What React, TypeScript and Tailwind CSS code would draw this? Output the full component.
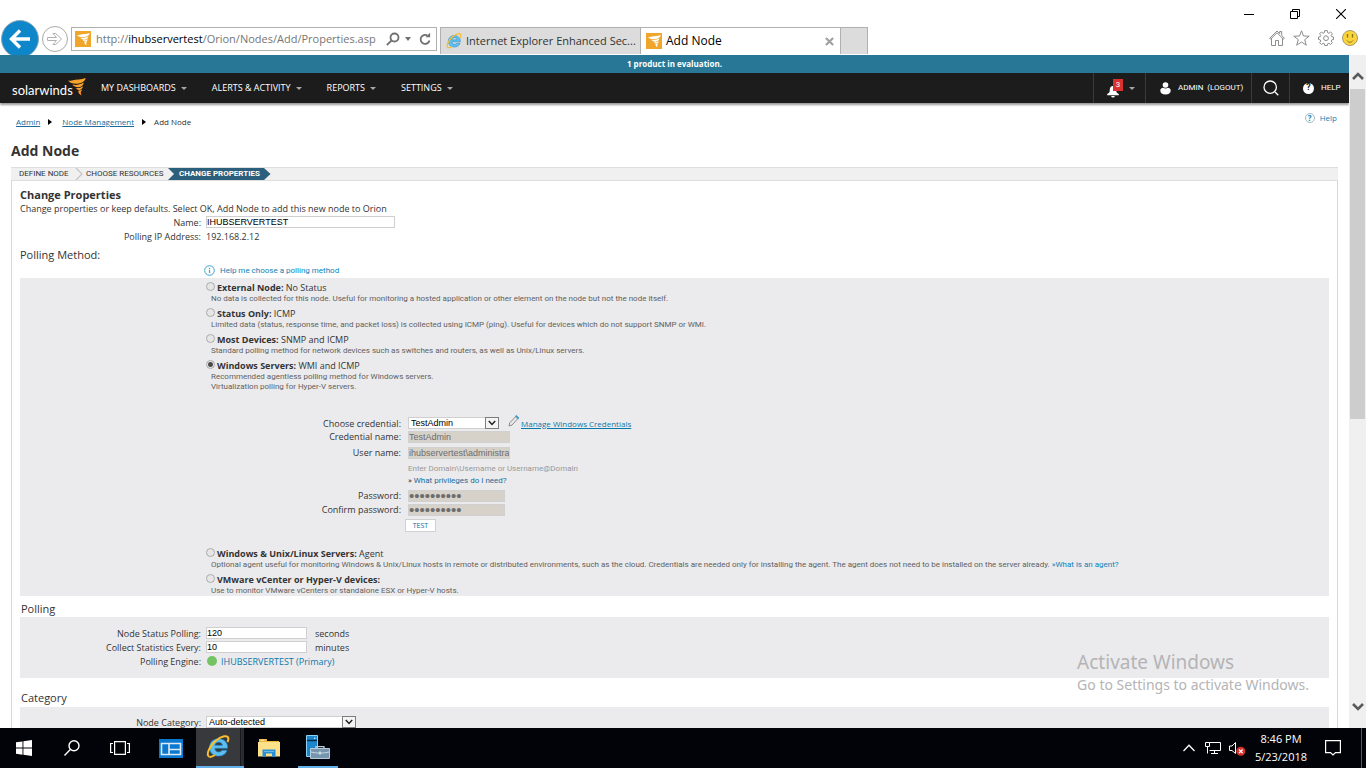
import React, { useState } from "react";

function Tornado({ className, color = "#f6a22b", shade }: { className: string; color?: string; shade?: string }) {
  return (
    <svg viewBox="0 0 18 18" className={className} aria-hidden="true">
      {shade && (
        <path
          d="M3 6.200c3 1.500 9 1 12-1.200l-1 1.600c-2.800 1.400-6.300 1.800-9 .8ZM7 10.200c2 .9 5 .7 7.300-.6l-1 1.300c-1.800.8-3.800.8-5.300.2ZM10.300 13.500l2.600.5.300 2.500.8 1.200c-2-.6-3.500-2.200-3.700-4.200Z"
          fill={shade}
        />
      )}
      <path d="M0 2.600C1.500 3 2.500 2.900 4 2.400 8.500 1.400 13 1.800 17.600 0c-.3 2.800-2.800 5-7 5.600C6 6.200 2 5.200 0 2.600Z" fill={color} />
      <path d="M4.500 6.600c3.500.8 7.600.3 11.300-2-.4 2.600-2.200 4.300-5 4.700-2.600.3-4.800-.8-6.300-2.700Z" fill={color} />
      <path d="M8 9.900c2.300.5 4.700.1 6.900-1.700-.2 2.200-1.500 3.500-3.300 3.700-1.600.1-2.800-.7-3.600-2Z" fill={color} />
      <path d="M10.300 12.500c1.300.2 2.500 0 3.700-1-.2 1.400-.8 2.100-1.500 2.500l.7 3.100c-1.900-.9-2.800-2.600-2.900-4.600Z" fill={color} />
    </svg>
  );
}

function SiteIcon() {
  return (
    <span className="flex size-4 shrink-0 items-center justify-center bg-[#f0a52b]">
      <Tornado className="size-[13px]" color="#ffffff" />
    </span>
  );
}

function IeLogo({ className }: { className: string }) {
  return (
    <svg viewBox="0 0 24 24" className={"shrink-0 " + className} aria-hidden="true">
      <path
        d="M21.500 13.300H8.800c.2 2.300 1.700 3.700 3.900 3.700 1.600 0 2.700-.6 3.300-1.700h5.100c-1.200 3.600-4.300 5.800-8.500 5.800-5.400 0-9.100-3.400-9.100-8.600s3.700-8.800 9.100-8.800 9 3.700 9 8.600c0 .4 0 .7-.1 1ZM8.900 10.300h7.500c-.2-1.900-1.600-3.100-3.700-3.100s-3.500 1.200-3.800 3.100Z"
        fill="#5cc0f0"
        stroke="#1f7fc0"
        strokeWidth=".7"
      />
      <path
        d="M3.400 21.900C-.5 20.300 3.200 10.900 10.300 5.200 15.700.9 21.700-.1 22.300 3c.2 1.200-.1 2.500-.8 4"
        fill="none"
        stroke="#f9bd2e"
        strokeWidth="2"
      />
      <path d="M3.400 21.900c1.300.3 3.300-.3 5.600-1.800" fill="none" stroke="#f9bd2e" strokeWidth="1.800" />
    </svg>
  );
}

function Caret() {
  return <span className="border-x-[3px] border-t-[3px] border-x-transparent border-t-[#a6a6a6]" />;
}

function BrowserHeader() {
  return (
    <header className="flex h-[55px] shrink-0 overflow-hidden bg-white">
      <div className="flex items-start pt-5">
        <button aria-label="Back" className="ml-px flex size-[38px] items-center justify-center rounded-full border border-[#8fa9b8] bg-[#0d86ca]">
          <svg viewBox="0 0 24 24" className="size-6" fill="none" stroke="#fff" strokeWidth="3.400">
            <path d="M22 12H4M12 3.500 3.500 12l8.500 8.500" />
          </svg>
        </button>
        <button aria-label="Forward" className="mt-[6px] ml-[3px] flex size-[26px] items-center justify-center rounded-full border border-[#a9a9a9]">
          <svg viewBox="0 0 16 16" className="size-4" fill="none" stroke="#b0b0b0" strokeWidth="1">
            <path d="M.5 6.500h9L6 2.500h2.700L14.500 8l-5.800 5.500H6l3.500-4h-9Z" />
          </svg>
        </button>
        <form className="mt-[7px] ml-[3px] flex h-6 w-[366px] items-center border border-[#b0b0b0] pr-[5px] pl-[3px]">
          <SiteIcon />
          <div className="ml-[5px] flex-1 text-[11px] leading-5 whitespace-nowrap text-[#767676]">
            http://<span className="text-black">ihubservertest</span>/Orion/Nodes/Add/Properties.asp
          </div>
          <button type="button" aria-label="Search" className="shrink-0">
            <svg viewBox="0 0 14 14" className="size-[14px]" fill="none" stroke="#707070" strokeWidth="1.800">
              <circle cx="8.500" cy="5.500" r="4" />
              <path d="M5.500 8.500.8 13.200" />
            </svg>
          </button>
          <span className="ml-[5px] border-x-[3px] border-t-4 border-x-transparent border-t-[#707070]" />
          <button type="button" aria-label="Refresh" className="ml-[8px] shrink-0">
            <svg viewBox="0 0 12 14" className="h-[14px] w-3" fill="none" stroke="#707070" strokeWidth="1.800">
              <path d="M10.500 8.500A4.500 4.500 0 1 1 8.500 3.600" />
              <path d="M6.500 5.200h4.600V.8Z" fill="#707070" stroke="none" />
            </svg>
          </button>
        </form>
        <nav className="mt-[7px] ml-[3px] flex h-[27px] text-[#333333]">
          <button className="flex w-[201px] items-center border border-b-0 border-[#b0b0b0] bg-[#dcdcdc] pl-[5px] text-[11px] whitespace-nowrap">
            <IeLogo className="mr-[4px] size-4" />
            Internet Explorer Enhanced Sec...
          </button>
          <div className="flex w-[199px] items-center border-t border-[#b0b0b0] bg-white pr-[6px] pl-[5px] text-[12px] text-black">
            <SiteIcon />
            <span className="ml-1 flex-1">Add Node</span>
            <button aria-label="Close tab">
              <svg viewBox="0 0 10 10" className="size-[9px]" stroke="#a0a0a0" strokeWidth="2.400">
                <path d="m1 1 8 8M9 1 1 9" />
              </svg>
            </button>
          </div>
          <button aria-label="New tab" className="w-7 border border-b-0 border-[#b0b0b0] bg-[#dcdcdc]" />
        </nav>
      </div>
      <div className="ml-auto flex flex-col items-end">
        <div className="flex h-[28px] items-center gap-9 pr-5">
          <button aria-label="Minimize">
            <svg viewBox="0 0 10 10" className="size-[10px]" stroke="#000"><path d="M0 5.500h10" /></svg>
          </button>
          <button aria-label="Restore">
            <svg viewBox="0 0 10 10" className="size-[10px]" fill="none" stroke="#000">
              <path d="M.5 2.500h7v7h-7ZM2.500 2.500v-2h7v7h-2" />
            </svg>
          </button>
          <button aria-label="Close">
            <svg viewBox="0 0 10 10" className="size-[10px]" fill="none" stroke="#000" strokeWidth="1.100"><path d="m0 0 10 10M10 0 0 10" /></svg>
          </button>
        </div>
        <div className="mt-[2px] flex gap-2 pr-2">
          <button aria-label="Home">
            <svg viewBox="0 0 16 16" className="size-4" fill="none" stroke="#8c8c8c" strokeWidth="1">
              <path d="M2.500 8v7.500h4v-5h3v5h4V8M.7 8.200 8 1l2.700 2.600V1.500h2v4l2.700 2.700-1 .9L8 2.800 1.600 9.100Z" />
            </svg>
          </button>
          <button aria-label="Favorites">
            <svg viewBox="0 0 17 16" className="h-4 w-[17px]" fill="none" stroke="#8c8c8c" strokeWidth="1">
              <path d="m8.500.8 2 5.200 5.700.2-4.500 3.500 1.600 5.500-4.800-3.200-4.800 3.200 1.600-5.500L.8 6.200l5.700-.2Z" />
            </svg>
          </button>
          <button aria-label="Tools">
            <svg viewBox="0 0 16 16" className="size-4" fill="none" stroke="#8c8c8c" strokeWidth="1">
              <path d="M6.700.6h2.600l.3 2.100 1.400.6 1.700-1.300 1.800 1.800L13.200 5.500l.6 1.300 1.700.2v2.500l-1.700.3-.6 1.200 1.200 1.700-1.800 1.800-1.700-1.200-1.300.5-.3 1.700H6.700l-.3-1.700-1.300-.5-1.700 1.200-1.800-1.800 1.200-1.700-.6-1.200-1.700-.3V7l1.700-.2.6-1.300L1.600 3.800 3.400 2l1.700 1.300 1.300-.6Z" />
              <circle cx="8" cy="8.200" r="2.400" />
            </svg>
          </button>
          <button aria-label="Send feedback">
            <svg viewBox="0 0 16 16" className="size-4">
              <circle cx="8" cy="8" r="7.500" fill="#fbd43c" stroke="#a39a72" />
              <path d="M5.500 4v3.500M10.500 4v3.500" stroke="#8a7420" strokeWidth="1.400" />
              <path d="M5 10.500c1.500 2.300 4.500 2.300 6 0" fill="none" stroke="#8a7420" />
            </svg>
          </button>
        </div>
      </div>
    </header>
  );
}

const MENUS = ["MY DASHBOARDS", "ALERTS & ACTIVITY", "REPORTS", "SETTINGS"];

function ProductNav() {
  return (
    <nav className="flex h-[30px] shrink-0 bg-[#1c1c1c] pl-3 text-white shadow-[0_2px_2px_#9a9a9a]">
      <a href="#home" className="flex w-[73px]">
        <span className="pt-[8px] font-['Lato'] text-[13px] leading-[18px]">solarwinds</span>
        <Tornado className="-ml-[5px] mt-[5px] size-[18px] shrink-0" shade="#c8371f" />
      </a>
      <div className="ml-4 flex items-center gap-[25px] text-[9px]">
        {MENUS.map((m) => (
          <button key={m} className="flex items-center gap-[5px] whitespace-nowrap">
            {m}
            <Caret />
          </button>
        ))}
      </div>
      <div className="ml-auto flex font-['Roboto','Open_Sans',sans-serif] text-[8px] whitespace-nowrap">
        <button aria-label="Notifications" className="flex w-[52px] items-center border-l border-[#3a3a3a] pl-[13px]">
          <span className="relative mt-[5px]">
            <svg viewBox="0 0 12 14" className="h-[14px] w-3" fill="#fff">
              <path d="M6 2c2.200 0 3.200 1.700 3.200 3.700 0 2.600.7 3.300 2.600 4.300v1.300H.2V10c1.900-1 2.600-1.700 2.600-4.300C2.800 3.700 3.800 2 6 2ZM4.200 12h3.600a1.800 1.500 0 0 1-3.600 0Z" />
            </svg>
            <span className="absolute -top-[5px] left-[6px] flex h-3 w-[10px] items-center justify-center bg-[#d9312e]">3</span>
          </span>
          <span className="ml-[10px] flex"><Caret /></span>
        </button>
        <a href="#logout" className="flex w-[106px] items-center border-l border-[#3a3a3a] pl-[14px]">
          <svg viewBox="0 0 11 13" className="mr-[7px] h-[13px] w-[11px]" fill="#fff">
            <circle cx="5.500" cy="3" r="2.800" />
            <path d="M.3 8.500c0-2 1.500-2.800 2.800-2.800 1.300 1 3.500 1 4.800 0 1.300 0 2.800.8 2.800 2.800 0 2.500-2 4-5.200 4s-5.200-1.500-5.200-4Z" />
          </svg>
          ADMIN&nbsp; (LOGOUT)
        </a>
        <button aria-label="Search" className="flex w-[38px] items-center justify-center border-l border-[#3a3a3a]">
          <svg viewBox="0 0 16 16" className="size-4" fill="none" stroke="#fff" strokeWidth="1.300">
            <circle cx="7.200" cy="7.200" r="6.200" />
            <path d="m12 12 3.300 3.300" />
          </svg>
        </button>
        <a href="#help" className="flex w-[60px] items-center border-l border-[#3a3a3a] pl-[13px]">
          <span className="mr-[7px] flex size-[11px] items-center justify-center rounded-full bg-white text-[9px] font-bold text-[#1c1c1c]">?</span>
          HELP
        </a>
      </div>
    </nav>
  );
}

function Steps() {
  return (
    <ol className="mx-[11px] flex h-[14px] shrink-0 items-center border-y border-[#dedede] bg-[#f0f0f0] pl-2 font-['Roboto','Open_Sans',sans-serif] text-[8px] leading-3 whitespace-nowrap text-[#333333]">
      <li className="w-[56px]">DEFINE NODE</li>
      <li className="flex items-center">
        <svg viewBox="0 0 8 12" className="h-3 w-2 shrink-0 stroke-[#c4c4c4]" fill="none" strokeWidth="1.200" aria-hidden="true">
          <path d="M1 0l6 6-6 6" />
        </svg>
        <span className="ml-[3px] w-[82px]">CHOOSE RESOURCES</span>
      </li>
      <li aria-current="step" className="flex h-3 items-center bg-[#2c5f7c] font-bold text-white">
        <svg viewBox="0 0 8 12" className="h-3 w-2" aria-hidden="true">
          <path d="M0 0 6 6 0 12Z" fill="#f0f0f0" />
        </svg>
        <span className="mx-[3px]">CHANGE PROPERTIES</span>
      </li>
      <li aria-hidden="true" className="flex">
        <svg viewBox="0 0 8 12" className="h-3 w-2">
          <path d="M0 0h1l6.500 6L1 12H0Z" fill="#2c5f7c" />
        </svg>
      </li>
    </ol>
  );
}

function Field({ label, id, children }: { label: string; id?: string; children: React.ReactNode }) {
  return (
    <div className="grid h-[14px] grid-cols-[181px_1fr] items-center gap-x-[5px]">
      <label htmlFor={id} className="text-right">{label}</label>
      <div className="flex items-center">{children}</div>
    </div>
  );
}

function Credential({ label, id, children }: { label: string; id: string; children: React.ReactNode }) {
  return (
    <div className="grid h-[13px] grid-cols-[381px_1fr] items-center gap-x-[7px]">
      <label htmlFor={id} className="text-right">{label}</label>
      <div className="flex items-center">{children}</div>
    </div>
  );
}

const INPUT = "h-3 border border-[#cfcfcf] bg-white p-0 font-['Liberation_Sans'] text-[9px] leading-[10px] text-black outline-none";
const DISABLED = "h-3 border border-[#d0d0d0] bg-[#d6d2ca] p-0 font-['Liberation_Sans'] leading-[10px] text-[#6d6d6d] outline-none";
const SMALL = "font-['Roboto','Open_Sans',sans-serif] text-[8px]";

function Select({ id, value, className }: { id: string; value: string; className: string }) {
  return (
    <span className="relative flex">
      <select id={id} className={"h-3 appearance-none border border-[#cfcfcf] bg-white pl-[2px] font-['Liberation_Sans'] text-[9px] leading-[10px] text-black " + className}>
        <option>{value}</option>
      </select>
      <span className="pointer-events-none absolute inset-y-0 right-0 flex w-[14px] items-center justify-center border border-[#7d7d7d] bg-[#f4f4f4]">
        <svg viewBox="0 0 8 6" className="h-[6px] w-2" fill="none" stroke="#222" strokeWidth="1.500"><path d="m.8 1 3.200 3.500L7.200 1" /></svg>
      </span>
    </span>
  );
}

function Method(props: {
  id: string;
  name: string;
  detail?: string;
  selected: string;
  onSelect: (id: string) => void;
  children: React.ReactNode;
}) {
  return (
    <div className="pl-[186px]">
      <div className="flex h-[14px] items-center">
        <input
          type="radio"
          name="method"
          id={props.id}
          checked={props.selected === props.id}
          onChange={() => props.onSelect(props.id)}
          className="mb-[2px] size-[9px] shrink-0 appearance-none rounded-full border border-[#ababab] bg-[#e6e6e6] checked:bg-[radial-gradient(#4a4a4a_0_2px,#e6e6e6_3px)]"
        />
        <label htmlFor={props.id} className="ml-[2px] whitespace-pre">
          <b>{props.name}:</b> {props.detail}
        </label>
      </div>
      <div className={"pl-[5px] leading-[10px] text-[#5f5f5f] " + SMALL}>{props.children}</div>
    </div>
  );
}

function NodeForm() {
  const [method, setMethod] = useState("windows");
  const radio = { selected: method, onSelect: setMethod };
  return (
    <div className="mx-[11px] border-x border-[#d8d8d2] px-2 text-[9px] leading-[13px] text-[#333333]">
      <h2 className="pt-[6px] text-[11px] leading-[15px] font-bold">Change Properties</h2>
      <p>Change properties or keep defaults. Select OK, Add Node to add this new node to Orion</p>
      <Field label="Name:" id="name"><input id="name" defaultValue="IHUBSERVERTEST" className={"w-[189px] " + INPUT} /></Field>
      <Field label="Polling IP Address:">192.168.2.12</Field>
      <h3 className="pt-[3px] text-[11px] leading-[18px]">Polling Method:</h3>
      <a href="#method-help" className={"mb-px ml-[184px] flex h-[13px] w-fit items-center text-[#0b83b8] " + SMALL}>
        <svg viewBox="0 0 11 11" className="mr-[5px] size-[11px]" fill="none" stroke="#3ba4d0">
          <circle cx="5.500" cy="5.500" r="4.800" />
          <path d="M5.500 4.800v3.200M5.500 2.700v1.200" strokeWidth="1.200" />
        </svg>
        Help me choose a polling method
      </a>

      <section className="bg-[#ebebed] pt-[2px]">
        <div className="flex flex-col gap-[2px]">
          <Method id="external" name="External Node" detail="No Status" {...radio}>
            No data is collected for this node. Useful for monitoring a hosted application or other element on the node but not the node itself.
          </Method>
          <Method id="icmp" name="Status Only" detail="ICMP" {...radio}>
            Limited data (status, response time, and packet loss) is collected using ICMP (ping). Useful for devices which do not support SNMP or WMI.
          </Method>
          <Method id="snmp" name="Most Devices" detail="SNMP and ICMP" {...radio}>
            Standard polling method for network devices such as switches and routers, as well as Unix/Linux servers.
          </Method>
          <Method id="windows" name="Windows Servers" detail="WMI and ICMP" {...radio}>
            Recommended agentless polling method for Windows servers.
            <br />
            Virtualization polling for Hyper-V servers.
          </Method>
        </div>

        <div className="flex flex-col pt-[23px] pb-[14px]">
          <Credential label="Choose credential:" id="credential">
            <Select id="credential" value="TestAdmin" className="w-[91px]" />
            <svg viewBox="0 0 11 12" className="mb-[4px] ml-[9px] h-3 w-[11px]" fill="none" stroke="#8a8a8a">
              <path d="M1 11l.8-3.200L7.500 1.800l2.200 2L4 10Z" />
              <path d="m7.500 1.800.8-.9 2.200 2-.8.9" stroke="#2d9bd0" strokeWidth="1.300" />
            </svg>
            <a href="#credentials" className="ml-[2px] text-[8px] text-[#0b78ac] underline">Manage Windows Credentials</a>
          </Credential>
          <div className="mt-[2px] flex flex-col gap-[3px]">
            <Credential label="Credential name:" id="credname">
              <input id="credname" disabled defaultValue="TestAdmin" className={"w-[102px] text-[9px] " + DISABLED} />
            </Credential>
            <Credential label="User name:" id="user">
              <input id="user" disabled defaultValue="ihubservertest\administra" className={"w-[102px] text-[9px] " + DISABLED} />
            </Credential>
          </div>
          <p className={"mt-1 ml-[388px] leading-3 text-[#999999] " + SMALL}>Enter Domain\Username or Username@Domain</p>
          <p className={"mb-[2px] ml-[388px] leading-3 " + SMALL}>
            » <a href="#privileges" className="text-[#1b6a97]">What privileges do I need?</a>
          </p>
          <div className="flex flex-col gap-px">
            <Credential label="Password:" id="password">
              <input id="password" type="password" disabled defaultValue="0123456789" className={"w-[97px] text-[15px] " + DISABLED} />
            </Credential>
            <Credential label="Confirm password:" id="confirm">
              <input id="confirm" type="password" disabled defaultValue="0123456789" className={"w-[97px] text-[15px] " + DISABLED} />
            </Credential>
          </div>
          <button className="mt-[3px] ml-[385px] h-[13px] w-[31px] border border-[#d0d0d0] bg-white text-[7px] leading-[10px] text-[#1b6a97]">TEST</button>
        </div>

        <div className="flex flex-col gap-[2px]">
          <Method id="agent" name="Windows & Unix/Linux Servers" detail="Agent" {...radio}>
            Optional agent useful for monitoring Windows &amp; Unix/Linux hosts in remote or distributed environments, such as the cloud. Credentials are needed only for installing the agent. The agent does not need to be installed on the server already.{" "}
            <a href="#agent-help" className="text-[#0b83b8]">»What is an agent?</a>
          </Method>
          <Method id="vmware" name="VMware vCenter or Hyper-V devices" {...radio}>
            Use to monitor VMware vCenters or standalone ESX or Hyper-V hosts.
          </Method>
        </div>
      </section>

      <h3 className="pt-1 pl-px text-[11px] leading-[17px]">Polling</h3>
      <section className="bg-[#ebebed] pt-[9px] pb-[10px]">
        <Field label="Node Status Polling:" id="status">
          <input id="status" defaultValue="120" className={"w-[101px] " + INPUT} />
          <span className="ml-2">seconds</span>
        </Field>
        <Field label="Collect Statistics Every:" id="stats">
          <input id="stats" defaultValue="10" className={"w-[101px] " + INPUT} />
          <span className="ml-2">minutes</span>
        </Field>
        <Field label="Polling Engine:">
          <span className="ml-px size-[10px] rounded-full bg-[#74c365]" />
          <a href="#engine" className="ml-1 text-[#0b78ac]">IHUBSERVERTEST (Primary)</a>
        </Field>
      </section>

      <h3 className="pt-[11px] pl-px text-[11px] leading-[18px]">Category</h3>
      <section className="bg-[#ebebed] pt-2 pb-10">
        <Field label="Node Category:" id="category"><Select id="category" value="Auto-detected" className="w-[150px]" /></Field>
      </section>
    </div>
  );
}

function Taskbar() {
  return (
    <footer className="flex h-10 shrink-0 bg-[#020308] text-white">
      <button aria-label="Start" className="flex w-12 items-center justify-center">
        <svg viewBox="0 0 16 16" className="size-4" fill="#fff"><path d="M0 2.300 6.500 1.400V7.600H0ZM7.400 1.300 16 0v7.600H7.400ZM0 8.500h6.500v6.200L0 13.800ZM7.400 8.500H16V16l-8.600-1.200Z" /></svg>
      </button>
      <button aria-label="Search" className="flex w-12 items-center justify-center">
        <svg viewBox="0 0 16 16" className="size-4" fill="none" stroke="#fff" strokeWidth="1.400"><circle cx="10" cy="5.800" r="5" /><path d="M6.300 9.500.5 15.500" /></svg>
      </button>
      <button aria-label="Task view" className="flex w-12 items-center justify-center">
        <svg viewBox="0 0 20 14" className="h-[14px] w-5" fill="none" stroke="#fff" strokeWidth="1.200"><path d="M4.600.6h10.800v12.800H4.600ZM3 2.500H.6v9H3M17 2.500h2.400v9H17" /></svg>
      </button>
      <button aria-label="Server console" className="ml-[3px] flex w-12 items-center justify-center">
        <svg viewBox="0 0 24 19" className="h-[19px] w-6">
          <path d="M0 0h24v19H0Z" fill="#0b78d0" />
          <path d="M2.500 4.500h19v11h-19ZM10 4.500v11M10 10.500h11.500" fill="none" stroke="#dceaf5" strokeWidth="1.600" />
        </svg>
      </button>
      <button aria-label="Internet Explorer" className="ml-px flex w-12 border-b-2 border-[#63b1e8]">
        <span className="flex h-full flex-1 items-center justify-center bg-[#37393d]"><IeLogo className="size-6" /></span>
        <span className="h-full w-1 border-l border-[#17191c] bg-[#2a2c30]" />
      </button>
      <button aria-label="File Explorer" className="ml-px flex w-12 items-center justify-center">
        <svg viewBox="0 0 22 18" className="h-[18px] w-[22px]">
          <path d="M1 0h8v2h12v4H1Z" fill="#e9b53c" />
          <path d="M2.500 1.200h4" stroke="#fff2c4" />
          <path d="M0 3h22v14.500H0Z" fill="#fde08a" />
          <path d="M4.500 18v-7.500h13V18H14v-3.500H8V18Z" fill="#2b8fd8" />
          <path d="M6 12.500h10" stroke="#6cb8ea" />
        </svg>
      </button>
      <button aria-label="Server Manager" className="ml-[5px] flex w-10 items-center justify-center border-b-2 border-[#63b1e8]">
        <svg viewBox="0 0 24 24" className="size-6">
          <path d="M.5.500h11v21H.5Z" fill="#1b86cc" stroke="#8fd0f5" />
          <path d="M1 5.500h10" stroke="#0a2c4a" strokeWidth="1.400" />
          <path d="M8 3.200h1.500" stroke="#fff" />
          <path d="M10 13.500v-1.800h8v1.800" fill="none" stroke="#b9cfdf" strokeWidth="1.300" />
          <path d="M4.500 13.500h19v10h-19Z" fill="#7796ad" stroke="#b4cbdb" />
          <path d="M5 17c5 1.500 13 1.500 18 0" fill="none" stroke="#c5d8e5" />
          <path d="M14 16.500v3" stroke="#e6f0f6" strokeWidth="1.400" />
        </svg>
      </button>
      <div className="ml-auto flex items-center">
        <button aria-label="Show hidden icons">
          <svg viewBox="0 0 12 8" className="h-2 w-3" fill="none" stroke="#fff" strokeWidth="1.300"><path d="m.5 7 5.500-5.700L11.500 7" /></svg>
        </button>
        <svg viewBox="0 0 16 14" className="ml-[10px] h-[14px] w-4" fill="none" stroke="#fff"><path d="M4.500 1.500h11v8h-11M.5 1.500h4v4h-4ZM2.500 5.500v7M9.500 9.500v3M6 12.500h7" /></svg>
        <svg viewBox="0 0 17 15" className="ml-2 h-[15px] w-[17px]" fill="none" stroke="#fff">
          <path d="M.5 5h2.500L6.500 1.500v11L3 9.500H.5Z" />
          <circle cx="11.800" cy="10.300" r="4.500" fill="#d9302c" stroke="none" />
          <path d="m10 8.500 3.600 3.600M13.600 8.500 10 12.100" strokeWidth="1.300" />
        </svg>
        <div className="w-[70px] text-center text-[11px] leading-[18px] whitespace-nowrap">
          <div>8:46 PM</div>
          <div>5/23/2018</div>
        </div>
        <button aria-label="Notifications" className="ml-[9px]">
          <svg viewBox="0 0 16 16" className="size-4" fill="none" stroke="#fff" strokeWidth="1.200"><path d="M.6.600h14.800v12H10.500L8 15l-2.500-2.400H.6Z" /></svg>
        </button>
        <span className="ml-[20px] h-10 w-[5px] border-l border-[#55585c]" />
      </div>
    </footer>
  );
}

export default function App() {
  return (
    <div className="relative flex h-screen flex-col overflow-hidden bg-white font-['Open_Sans','Noto_Sans',sans-serif]">
      <BrowserHeader />
      <div className="flex min-h-0 flex-1">
        <main className="flex min-w-0 flex-1 flex-col overflow-hidden">
          <div className="h-[18px] shrink-0 bg-[#287796] text-center text-[8px] leading-[18px] font-bold text-white">1 product in evaluation.</div>
          <ProductNav />
          <div className="flex items-start justify-between pr-3 pl-4 text-[8px] leading-3">
            <nav className="flex items-center gap-2 pt-[13px] text-[#333333]">
              <a href="#admin" className="text-[#1b6a97] underline">Admin</a>
              <span className="border-y-[3px] border-l-4 border-y-transparent border-l-black" />
              <a href="#nodes" className="ml-[2px] text-[#1b6a97] underline">Node Management</a>
              <span className="border-y-[3px] border-l-4 border-y-transparent border-l-black" />
              <span>Add Node</span>
            </nav>
            <a href="#page-help" className="flex items-center gap-[5px] pt-[9px] text-[#0b83b8]">
              <span className="flex size-[10px] items-center justify-center rounded-full border border-[#9dbccb] font-bold">?</span>
              Help
            </a>
          </div>
          <h1 className="pt-[13px] pb-[6px] pl-[11px] text-[14px] leading-5 font-bold text-[#333333]">Add Node</h1>
          <Steps />
          <NodeForm />
        </main>
        <div aria-hidden="true" className="flex w-[17px] shrink-0 flex-col items-center bg-[#f0f0f0]">
          <svg viewBox="0 0 12 8" className="mt-[17px] h-2 w-3" fill="none" stroke="#5a5a5a" strokeWidth="2.600"><path d="m1 7 5-5 5 5" /></svg>
          <span className="mt-[9px] h-[49%] w-[15px] bg-[#cdcdcd]" />
          <svg viewBox="0 0 12 8" className="mt-auto mb-[17px] h-2 w-3" fill="none" stroke="#5a5a5a" strokeWidth="2.600"><path d="m1 1 5 5 5-5" /></svg>
        </div>
      </div>
      <Taskbar />
      <div className="pointer-events-none absolute right-[57px] bottom-[72px] font-['Noto_Sans',sans-serif] text-[#b4b4b6]">
        <div className="text-[19px] leading-6">Activate Windows</div>
        <div className="text-[14px] leading-[22px]">Go to Settings to activate Windows.</div>
      </div>
    </div>
  );
}
